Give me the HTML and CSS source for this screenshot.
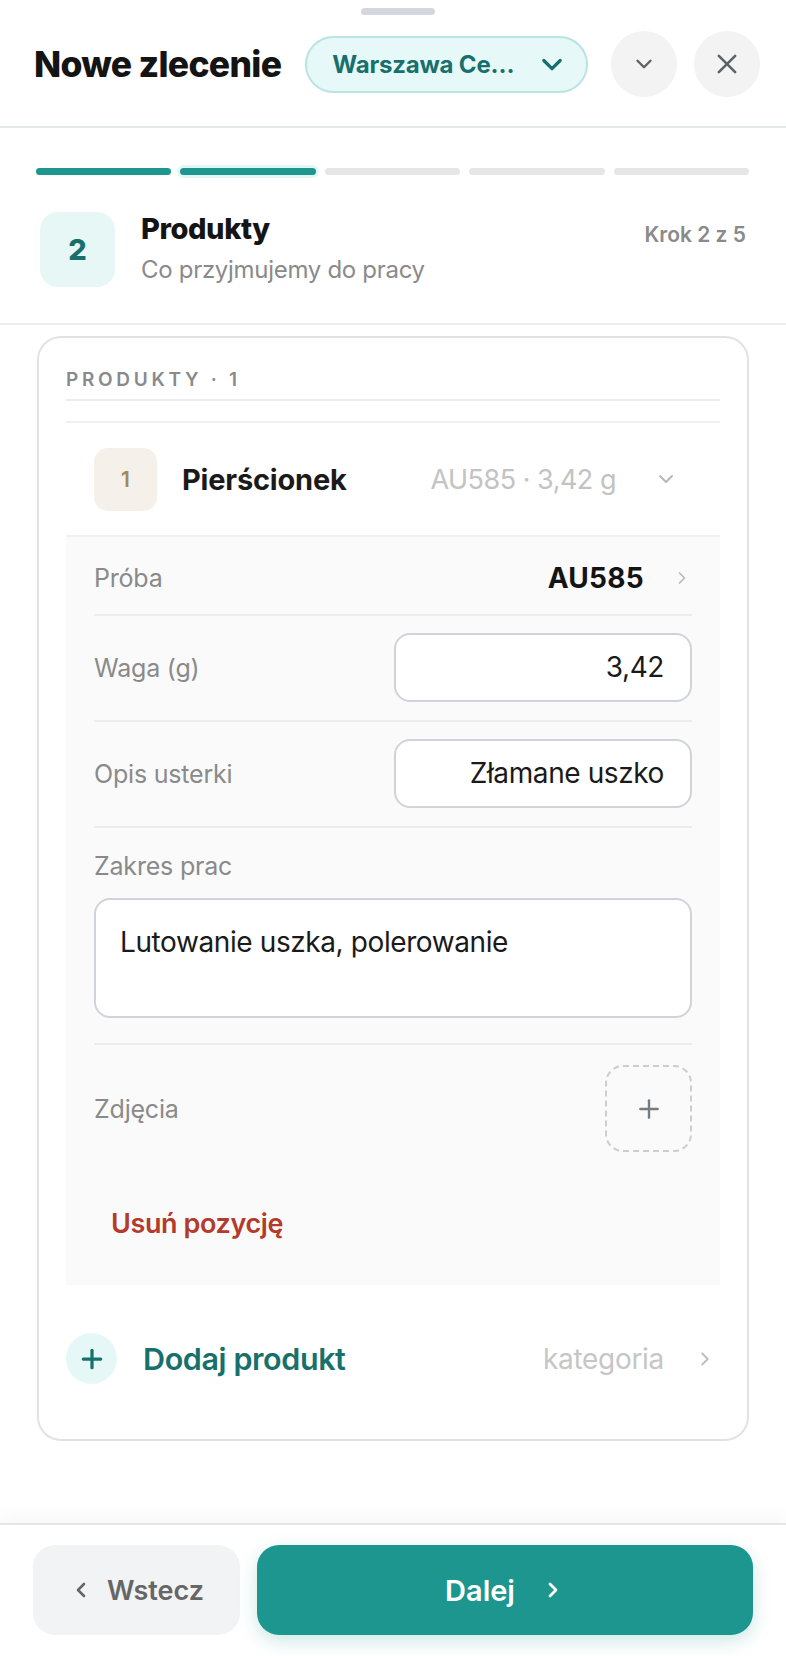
FILE: index.html
```html
<!DOCTYPE html>
<html lang="pl">
<head>
  <meta charset="UTF-8">
  <title>Nowe zlecenie</title>
  <link rel="stylesheet" href="styles.css">
</head>
<body>
  <div class="sheet">

    <!-- Header -->
    <header class="top">
      <div class="grab"></div>
      <div class="top-row">
        <h1 class="title">Nowe zlecenie</h1>
        <button class="branch">
          <span class="branch-name">Warszawa Ce…</span>
          <svg width="28" height="28" viewBox="0 0 24 24" fill="none" stroke="currentColor" stroke-width="2.8" stroke-linecap="round" stroke-linejoin="round"><polyline points="5 9 12 16 19 9"/></svg>
        </button>
        <button class="round">
          <svg width="26" height="26" viewBox="0 0 24 24" fill="none" stroke="currentColor" stroke-width="2.2" stroke-linecap="round" stroke-linejoin="round"><polyline points="6 9 12 15 18 9"/></svg>
        </button>
        <button class="round">
          <svg width="28" height="28" viewBox="0 0 24 24" fill="none" stroke="currentColor" stroke-width="2.2" stroke-linecap="round"><line x1="5" y1="5" x2="19" y2="19"/><line x1="19" y1="5" x2="5" y2="19"/></svg>
        </button>
      </div>
    </header>

    <!-- Steps -->
    <section class="steps">
      <div class="progress">
        <span class="bar done"></span>
        <span class="bar done current"></span>
        <span class="bar"></span>
        <span class="bar"></span>
        <span class="bar"></span>
      </div>
      <div class="step-head">
        <div class="step-num">2</div>
        <div class="step-text">
          <h2>Produkty</h2>
          <p>Co przyjmujemy do pracy</p>
        </div>
        <div class="step-count">Krok 2 z 5</div>
      </div>
    </section>

    <!-- Content -->
    <main class="content">
      <div class="card">
        <div class="card-label">PRODUKTY · 1</div>

        <div class="item">
          <div class="item-head">
            <div class="item-num">1</div>
            <div class="item-name">Pierścionek</div>
            <div class="item-meta">AU585 · 3,42 g</div>
            <svg class="item-chev" width="24" height="24" viewBox="0 0 24 24" fill="none" stroke="currentColor" stroke-width="2" stroke-linecap="round" stroke-linejoin="round"><polyline points="6 9 12 15 18 9"/></svg>
          </div>

          <div class="item-body">
            <div class="field">
              <span class="field-label">Próba</span>
              <span class="field-value">
                <b>AU585</b>
                <svg width="20" height="20" viewBox="0 0 24 24" fill="none" stroke="currentColor" stroke-width="2" stroke-linecap="round" stroke-linejoin="round"><polyline points="9 6 15 12 9 18"/></svg>
              </span>
            </div>
            <div class="field">
              <span class="field-label">Waga (g)</span>
              <div class="input">3,42</div>
            </div>
            <div class="field">
              <span class="field-label">Opis usterki</span>
              <div class="input">Złamane uszko</div>
            </div>
            <div class="field stacked">
              <span class="field-label">Zakres prac</span>
              <div class="textarea">Lutowanie uszka, polerowanie</div>
            </div>
            <div class="field photos">
              <span class="field-label">Zdjęcia</span>
              <div class="photo-add">
                <svg width="26" height="26" viewBox="0 0 24 24" fill="none" stroke="currentColor" stroke-width="2.2" stroke-linecap="round"><line x1="12" y1="4" x2="12" y2="20"/><line x1="4" y1="12" x2="20" y2="12"/></svg>
              </div>
            </div>
            <button class="remove">Usuń pozycję</button>
          </div>
        </div>

        <div class="add-row">
          <span class="add-icon">
            <svg width="26" height="26" viewBox="0 0 24 24" fill="none" stroke="currentColor" stroke-width="3" stroke-linecap="round"><line x1="12" y1="4" x2="12" y2="20"/><line x1="4" y1="12" x2="20" y2="12"/></svg>
          </span>
          <span class="add-text">Dodaj produkt</span>
          <span class="add-cat">kategoria</span>
          <svg class="add-chev" width="22" height="22" viewBox="0 0 24 24" fill="none" stroke="currentColor" stroke-width="2" stroke-linecap="round" stroke-linejoin="round"><polyline points="9 6 15 12 9 18"/></svg>
        </div>
      </div>
    </main>

    <!-- Footer -->
    <footer class="actions">
      <button class="btn back">
        <svg width="24" height="24" viewBox="0 0 24 24" fill="none" stroke="currentColor" stroke-width="2.6" stroke-linecap="round" stroke-linejoin="round"><polyline points="15 6 9 12 15 18"/></svg>
        Wstecz
      </button>
      <button class="btn next">
        Dalej
        <svg width="24" height="24" viewBox="0 0 24 24" fill="none" stroke="currentColor" stroke-width="2.8" stroke-linecap="round" stroke-linejoin="round"><polyline points="9 6 15 12 9 18"/></svg>
      </button>
    </footer>

  </div>
</body>
</html>
```

FILE: styles.css
```css
* {
  margin: 0;
  padding: 0;
  box-sizing: border-box;
}

body {
  font-family: Inter, 'Noto Sans', sans-serif;
  background: #fff;
  color: #1a1a1a;
}

button {
  font-family: inherit;
  border: none;
  background: none;
  cursor: pointer;
}

.sheet {
  display: flex;
  flex-direction: column;
  min-height: 100vh;
}

/* Header */

.top {
  padding: 8px 25px 29px 34px;
  border-bottom: 2px solid #e4eaea;
}

.grab {
  width: 74px;
  height: 7px;
  margin: 0 auto 16px;
  border-radius: 4px;
  background: #d4d8de;
}

.top-row {
  display: flex;
  align-items: center;
  height: 66px;
}

.title {
  font-size: 35.5px;
  font-weight: 800;
  letter-spacing: -0.7px;
  color: #141414;
  margin-right: 24px;
  white-space: nowrap;
}

.branch {
  display: flex;
  align-items: center;
  justify-content: space-between;
  width: 283px;
  height: 57px;
  padding: 0 20px 0 25px;
  border: 2px solid #b9e4e1;
  border-radius: 29px;
  background: #e7f8f8;
  color: #17706b;
  margin-right: 23px;
  flex: none;
}

.branch-name {
  font-size: 24px;
  font-weight: 700;
  letter-spacing: -0.2px;
}

.round {
  width: 66px;
  height: 66px;
  border-radius: 50%;
  background: #f3f3f3;
  color: #5a6266;
  display: flex;
  align-items: center;
  justify-content: center;
  flex: none;
}

.round + .round {
  margin-left: 17px;
}

/* Steps */

.steps {
  padding: 40px 37px 36px 36px;
  border-bottom: 2px solid #ececec;
}

.progress {
  display: flex;
  gap: 9px;
}

.bar {
  flex: 1;
  height: 7px;
  border-radius: 4px;
  background: #e6e6e6;
}

.bar.done {
  background: #1c968f;
}

.bar.current {
  box-shadow: 0 0 0 3px #e2f6f5;
}

.step-head {
  display: flex;
  align-items: flex-start;
  margin-top: 37px;
  padding-left: 4px;
}

.step-num {
  width: 75px;
  height: 75px;
  border-radius: 18px;
  background: #e6f7f6;
  color: #17706b;
  font-size: 29px;
  font-weight: 800;
  display: flex;
  align-items: center;
  justify-content: center;
  flex: none;
}

.step-text {
  margin-left: 26px;
  flex: 1;
}

.step-text h2 {
  font-size: 29px;
  font-weight: 800;
  letter-spacing: -0.4px;
  line-height: 34px;
  color: #141414;
}

.step-text p {
  margin-top: 9px;
  font-size: 24px;
  color: #8a8a8a;
  letter-spacing: -0.3px;
  line-height: 30px;
}

.step-count {
  font-size: 21px;
  font-weight: 600;
  color: #8a8a8a;
  margin-top: 10px;
  margin-right: 3px;
}

/* Content */

.content {
  flex: 1;
  padding: 11px 37px 0 37px;
}

.card {
  border: 2px solid #e2e2e2;
  border-radius: 24px;
  padding: 30px 27px 55px;
}

.card-label {
  font-size: 19px;
  font-weight: 600;
  letter-spacing: 3.7px;
  color: #8a8a8a;
  line-height: 24px;
  padding-bottom: 7px;
  border-bottom: 2px solid #ececec;
}

.item {
  margin-top: 20px;
  border-top: 2px solid #f0f0f0;
}

.item-head {
  display: flex;
  align-items: center;
  height: 114px;
  padding: 0 42px 0 28px;
  border-bottom: 2px solid #f0f0f0;
}

.item-num {
  width: 63px;
  height: 63px;
  border-radius: 14px;
  background: #f5f1ea;
  color: #a08a5e;
  font-size: 21px;
  font-weight: 600;
  display: flex;
  align-items: center;
  justify-content: center;
  flex: none;
}

.item-name {
  margin-left: 25px;
  font-size: 29px;
  font-weight: 700;
  letter-spacing: -0.2px;
  flex: 1;
}

.item-meta {
  font-size: 27px;
  color: #c3c3c3;
  letter-spacing: -0.5px;
  margin-right: 38px;
}

.item-chev {
  color: #b8b8b8;
}

.item-body {
  background: #fafafa;
  padding: 0 28px 45px;
}

.field {
  display: flex;
  align-items: center;
  justify-content: space-between;
  border-bottom: 2px solid #ececec;
  padding: 17px 0 18px;
  min-height: 79px;
}

.field:first-child {
  padding-top: 22px;
}

.field-label {
  font-size: 25px;
  color: #8a8a8a;
  letter-spacing: -0.2px;
  line-height: 30px;
}

.field-value {
  display: flex;
  align-items: center;
  gap: 28px;
  color: #b8b8b8;
}

.field-value b {
  font-size: 28px;
  font-weight: 700;
  color: #141414;
  letter-spacing: 0.3px;
}

.input {
  width: 298px;
  height: 69px;
  border: 2px solid #d0d3d9;
  border-radius: 16px;
  background: #fff;
  padding: 0 26px;
  font-size: 28px;
  color: #1a1a1a;
  text-align: right;
  line-height: 65px;
  letter-spacing: -0.4px;
  white-space: nowrap;
}

.field.stacked {
  display: block;
  padding: 23px 0 25px;
}

.textarea {
  margin-top: 17px;
  height: 120px;
  border: 2px solid #d0d3d9;
  border-radius: 16px;
  background: #fff;
  padding: 25px 24px;
  font-size: 28px;
  line-height: 34px;
  letter-spacing: -0.4px;
}

.field.photos {
  border-bottom: none;
  padding: 20px 0 0;
}

.photo-add {
  width: 87px;
  height: 87px;
  border: 2px dashed #cdcdcd;
  border-radius: 18px;
  color: #767d82;
  display: flex;
  align-items: center;
  justify-content: center;
}

.remove {
  margin-top: 56px;
  padding: 0 17px;
  font-size: 27px;
  font-weight: 600;
  color: #b43a2c;
  letter-spacing: -0.4px;
  line-height: 32px;
}

.add-row {
  display: flex;
  align-items: center;
  margin-top: 48px;
}

.add-icon {
  width: 51px;
  height: 51px;
  border-radius: 50%;
  background: #e6f7f7;
  color: #17706b;
  display: flex;
  align-items: center;
  justify-content: center;
}

.add-text {
  margin-left: 26px;
  font-size: 30.5px;
  font-weight: 600;
  color: #17706b;
  letter-spacing: -0.4px;
  flex: 1;
}

.add-cat {
  font-size: 28px;
  color: #c6c6c6;
  letter-spacing: -0.3px;
  margin-right: 30px;
}

.add-chev {
  color: #bdbdbd;
  margin-right: 4px;
}

/* Footer */

.actions {
  display: flex;
  gap: 17px;
  padding: 20px 33px 21px;
  border-top: 2px solid #e6e6e6;
  box-shadow: 0 -8px 16px rgba(0, 0, 0, 0.03);
}

.btn {
  height: 90px;
  border-radius: 22px;
  display: flex;
  align-items: center;
  justify-content: center;
  font-size: 27px;
  font-weight: 600;
}

.btn.back {
  width: 207px;
  background: #f2f3f5;
  color: #666;
  gap: 14px;
}

.btn.next {
  flex: 1;
  background: #1c968f;
  color: #fff;
  gap: 26px;
  font-size: 29px;
  font-weight: 600;
  box-shadow: 0 6px 18px rgba(28, 150, 143, 0.22);
}
```
